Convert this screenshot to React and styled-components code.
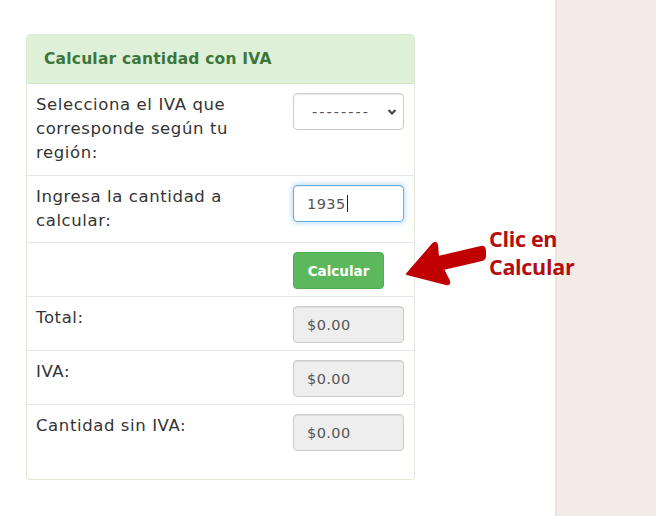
import styled, { createGlobalStyle } from 'styled-components';

const Global = createGlobalStyle`
  html, body {
    margin: 0;
    padding: 0;
    background: #fff;
  }
  body {
    font-family: "DejaVu Sans", "Liberation Sans", sans-serif;
    color: #333;
  }
`;

const Page = styled.div`
  display: flex;
  width: 656px;
  height: 516px;
  overflow: hidden;
`;

const Main = styled.div`
  position: relative;
  width: 555px;
  flex-shrink: 0;
  padding: 34px 0 0 26px;
  box-sizing: border-box;
`;

const Side = styled.div`
  flex: 1;
  background: #f2ebe6;
  border-left: 2px solid #ebe7dd;
`;

const Card = styled.div`
  width: 389px;
  border: 1px solid #dfe8d3;
  border-radius: 4px;
  box-sizing: border-box;
  padding-bottom: 21px;
  background: #fff;
`;

const Header = styled.div`
  height: 48px;
  display: flex;
  align-items: center;
  padding: 0 17px;
  background: #dff0d8;
  border-bottom: 1px solid #d6e9c6;
  border-radius: 3px 3px 0 0;
  color: #3c763d;
  font-weight: bold;
  font-size: 15.5px;
  letter-spacing: 0.2px;
`;

const Row = styled.div`
  display: grid;
  grid-template-columns: 1fr 111px;
  column-gap: 20px;
  padding: ${p => p.$pad || '9px 10px 7px 9px'};
  border-top: ${p => (p.$first ? 'none' : '1px solid #e6e6e6')};
`;

const Label = styled.div`
  font-size: 16.5px;
  line-height: 24px;
  letter-spacing: 0.6px;
  color: #333;
  max-width: 245px;
`;

const Field = styled.div`
  position: relative;
  height: 37px;
  box-sizing: border-box;
  border: 1px solid ${p => (p.$focus ? '#66afe9' : '#ccc')};
  border-radius: 4px;
  background: ${p => (p.$disabled ? '#eee' : '#fff')};
  box-shadow: ${p =>
    p.$focus
      ? 'inset 0 1px 1px rgba(0,0,0,.075), 0 0 6px rgba(102,175,233,.6)'
      : 'inset 0 1px 1px rgba(0,0,0,.075)'};
  display: flex;
  align-items: center;
  padding: 0 13px;
  font-size: 14.5px;
  letter-spacing: 0.4px;
  color: #555;
`;

const Dashes = styled.span`
  margin-left: 5px;
  letter-spacing: 2px;
  color: #555;
`;

const Chevron = styled.svg`
  position: absolute;
  right: 6px;
  top: 14px;
`;

const Caret = styled.span`
  display: inline-block;
  width: 1px;
  height: 17px;
  margin-left: 1px;
  background: #222;
`;

const Button = styled.button`
  width: 91px;
  height: 37px;
  border: 1px solid #4cae4c;
  border-radius: 4px;
  background: #5cb85c;
  color: #fff;
  font-family: inherit;
  font-weight: bold;
  font-size: 13.5px;
  padding: 0;
  cursor: pointer;
`;

const Note = styled.div`
  position: absolute;
  left: 489px;
  top: 225px;
  font-family: "Open Sans", "Liberation Sans", sans-serif;
  font-weight: bold;
  font-size: 21.5px;
  line-height: 28px;
  color: #b50d0d;
  letter-spacing: -0.3px;
`;

const Arrow = styled.svg`
  position: absolute;
  left: 404px;
  top: 239px;
`;

function Select() {
  return (
    <Field>
      <Dashes>--------</Dashes>
      <Chevron width="10" height="8" viewBox="0 0 10 8">
        <path d="M1.5 2 L5 5.5 L8.5 2" fill="none" stroke="#444" strokeWidth="2" />
      </Chevron>
    </Field>
  );
}

export default function App() {
  return (
    <Page>
      <Global />
      <Main>
        <Card>
          <Header>Calcular cantidad con IVA</Header>
          <Row $first $pad="9px 10px 10px 9px">
            <Label>Selecciona el IVA que corresponde según tu región:</Label>
            <Select />
          </Row>
          <Row $pad="9px 10px 9px 9px">
            <Label>Ingresa la cantidad a calcular:</Label>
            <Field $focus>
              1935<Caret />
            </Field>
          </Row>
          <Row>
            <Label />
            <Button>Calcular</Button>
          </Row>
          <Row>
            <Label>Total:</Label>
            <Field $disabled>$0.00</Field>
          </Row>
          <Row>
            <Label>IVA:</Label>
            <Field $disabled>$0.00</Field>
          </Row>
          <Row>
            <Label>Cantidad sin IVA:</Label>
            <Field $disabled>$0.00</Field>
          </Row>
        </Card>
        <Arrow width="86" height="50" viewBox="0 0 86 50">
          <path
            d="M3 35 L29 5 Q32 2 33 6 L34 18 L77 8 Q81 7 81 12 L81 17 Q81 20 78 21 L39 30 L45 42 Q46 46 42 45 Z"
            fill="#c00000"
            stroke="#c00000"
            strokeWidth="2"
            strokeLinejoin="round"
          />
        </Arrow>
        <Note>
          Clic en
          <br />
          Calcular
        </Note>
      </Main>
      <Side />
    </Page>
  );
}
